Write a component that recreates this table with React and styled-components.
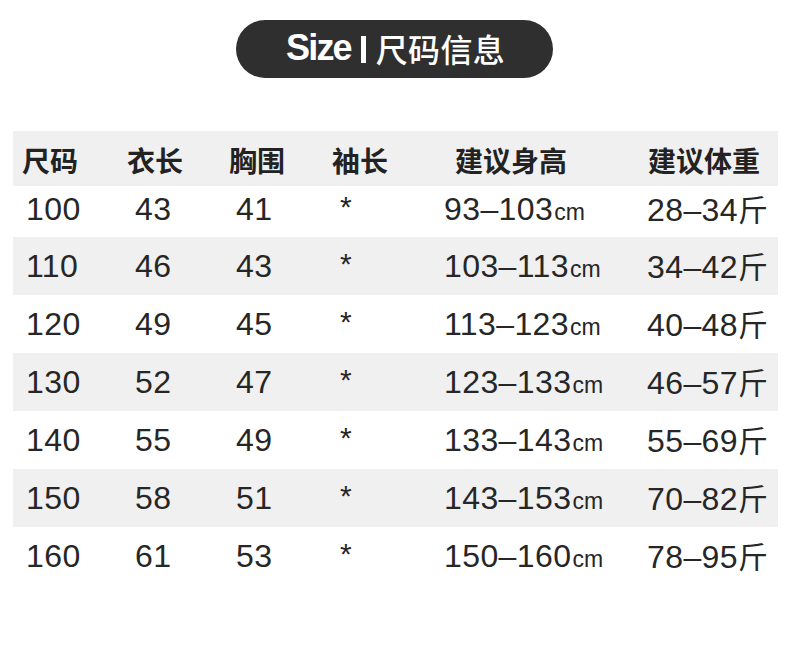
import React from "react";
import styled, { createGlobalStyle } from "styled-components";

const GlobalStyle = createGlobalStyle`
  html, body {
    margin: 0;
    padding: 0;
    background: #ffffff;
  }
  body {
    font-family: "Liberation Sans", "Noto Sans CJK SC", sans-serif;
    color: #262626;
  }
`;

const columns = [
  { key: "size", head: "尺码", hx: 9, dx: 13 },
  { key: "length", head: "衣长", hx: 7, dx: 15 },
  { key: "chest", head: "胸围", hx: 4, dx: 11 },
  { key: "sleeve", head: "袖长", hx: 7, dx: 15 },
  { key: "height", head: "建议身高", hx: 20, dx: 9 },
  { key: "weight", head: "建议体重", hx: 8, dx: 7 },
];

const rows = [
  ["100", "43", "41", "*", "93–103", "28–34"],
  ["110", "46", "43", "*", "103–113", "34–42"],
  ["120", "49", "45", "*", "113–123", "40–48"],
  ["130", "52", "47", "*", "123–133", "46–57"],
  ["140", "55", "49", "*", "133–143", "55–69"],
  ["150", "58", "51", "*", "143–153", "70–82"],
  ["160", "61", "53", "*", "150–160", "78–95"],
];

const SizeChart = () => {
  return (
    <Page>
      <GlobalStyle />
      <TitleWrap>
        <Pill>
          <TitleEn>Size</TitleEn>
          <Bar />
          <TitleCn>尺码信息</TitleCn>
        </Pill>
      </TitleWrap>
      <Table>
        <HeadRow>
          {columns.map((c) => (
            <HeadCell key={c.key} $pad={c.hx}>
              {c.head}
            </HeadCell>
          ))}
        </HeadRow>
        {rows.map((r, i) => (
          <Row key={r[0]} $shade={i % 2 === 1} $first={i === 0}>
            {r.map((v, j) => (
              <Cell key={columns[j].key} $pad={columns[j].dx} $star={v === "*"}>
                {v}
                {j === 4 && <Unit>cm</Unit>}
                {j === 5 && <Jin>斤</Jin>}
              </Cell>
            ))}
          </Row>
        ))}
      </Table>
    </Page>
  );
};

export default SizeChart;

const Page = styled.div`
  width: 790px;
  height: 658px;
  background: #ffffff;
  overflow: hidden;
`;

const TitleWrap = styled.div`
  display: flex;
  padding-top: 20px;
  padding-left: 236px;
`;

const Pill = styled.div`
  width: 317px;
  height: 58px;
  border-radius: 29px;
  background: #2f2f2f;
  color: #ffffff;
  display: flex;
  align-items: center;
  justify-content: center;
  gap: 10px;
  padding-bottom: 2px;
  padding-left: 2px;
  box-sizing: border-box;
`;

const TitleEn = styled.span`
  font-family: "Liberation Sans", sans-serif;
  font-weight: 700;
  font-size: 36px;
  letter-spacing: -1.8px;
`;

const Bar = styled.span`
  width: 5px;
  height: 27px;
  background: #ffffff;
  margin-top: 2px;
`;

const TitleCn = styled.span`
  font-family: "Noto Sans CJK SC", sans-serif;
  font-weight: 500;
  font-size: 32px;
  letter-spacing: 0.3px;
`;

const Table = styled.div`
  margin-top: 53px;
  margin-left: 13px;
  width: 765px;
`;

const grid = `
  display: grid;
  grid-template-columns: 107px 105px 100px 110px 205px 138px;
  align-items: center;
`;

const HeadRow = styled.div`
  ${grid}
  height: 55px;
  background: #f0f0f0;
`;

const HeadCell = styled.div`
  padding-left: ${(p) => p.$pad}px;
  font-family: "Noto Sans CJK SC", sans-serif;
  font-weight: 700;
  font-size: 28px;
  color: #222222;
  white-space: nowrap;
  line-height: 1;
  margin-top: 2px;
`;

const Row = styled.div`
  ${grid}
  height: ${(p) => (p.$first ? 51 : 58)}px;
  background: ${(p) => (p.$shade ? "#f0f0f0" : "#ffffff")};
  padding-bottom: ${(p) => (p.$first ? 5 : 0)}px;
  box-sizing: border-box;
`;

const Cell = styled.div`
  padding-left: ${(p) => p.$pad}px;
  font-family: "Liberation Sans", "Noto Sans CJK SC", sans-serif;
  font-size: ${(p) => (p.$star ? 30 : 32)}px;
  color: #262626;
  white-space: nowrap;
  line-height: 1;
  letter-spacing: 0.4px;
  display: flex;
  align-items: baseline;
  margin-top: ${(p) => (p.$star ? -4 : 0)}px;
`;

const Unit = styled.span`
  font-size: 23px;
  margin-left: 1px;
  letter-spacing: 0;
`;

const Jin = styled.span`
  font-family: "Noto Sans CJK SC", sans-serif;
  font-size: 30px;
  letter-spacing: 0;
`;
